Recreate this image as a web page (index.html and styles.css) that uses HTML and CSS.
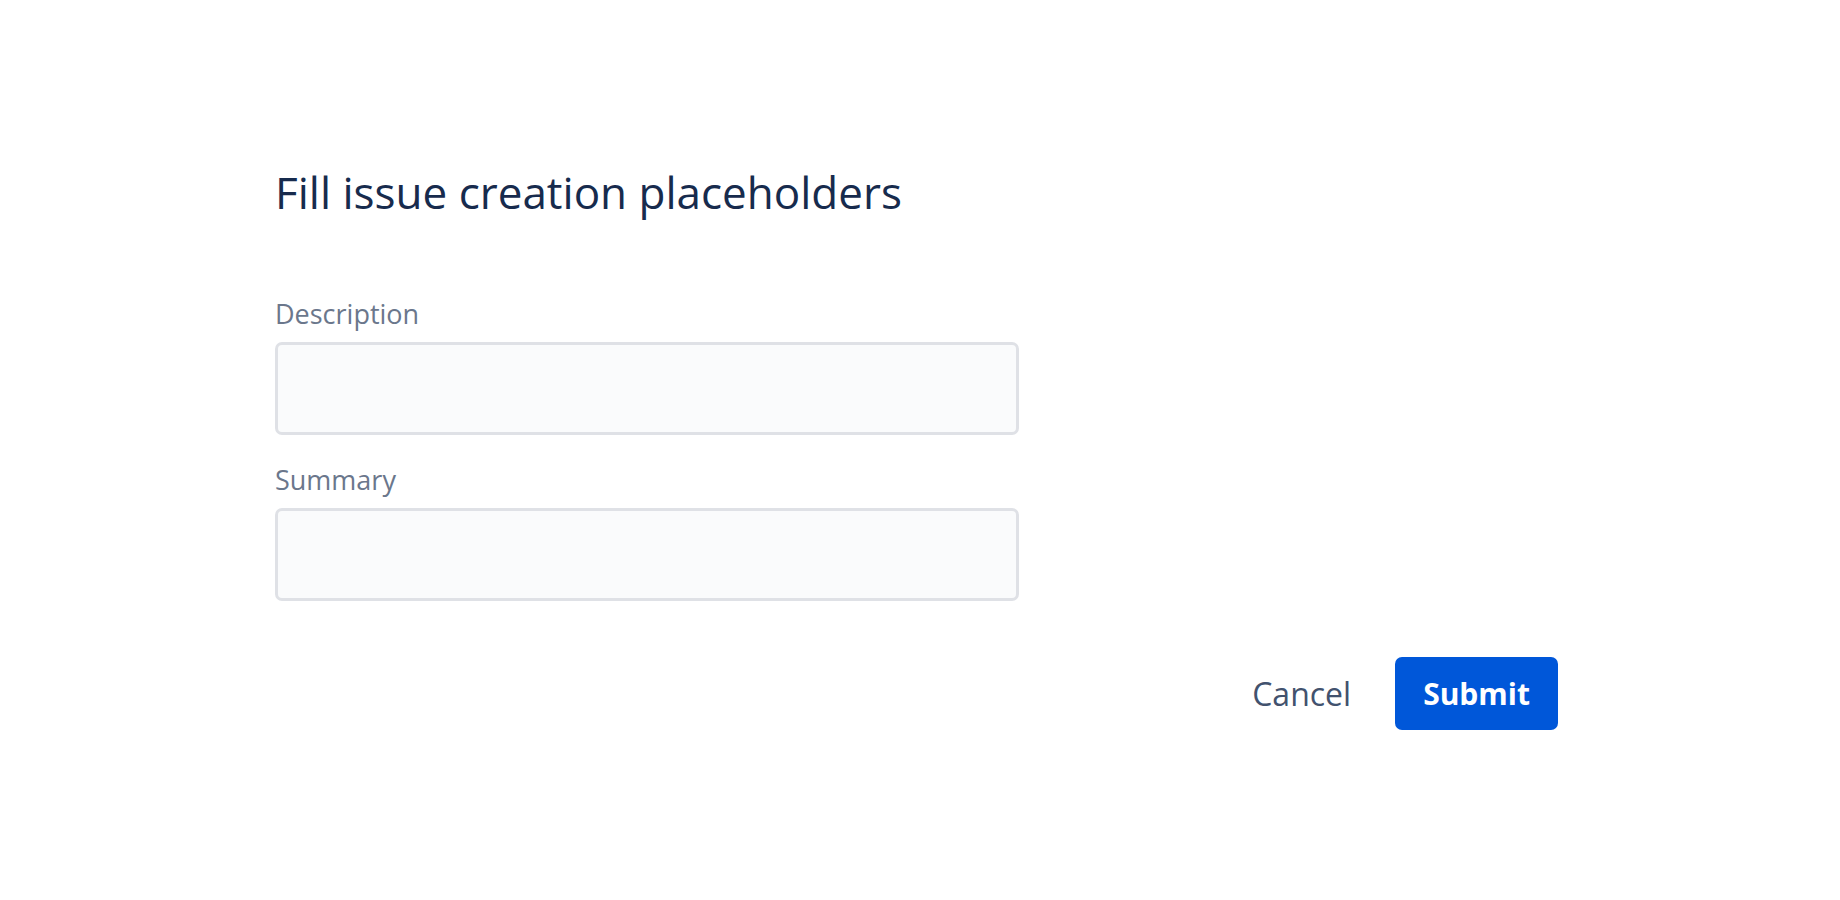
FILE: index.html
```html
<!DOCTYPE html>
<html lang="en">
<head>
    <meta charset="UTF-8">
    <meta name="viewport" content="width=device-width, initial-scale=1.0">
    <title>Fill issue creation placeholders</title>
    <link rel="stylesheet" href="styles.css">
</head>
<body>
    <div class="dialog">
        <h1 class="dialog-title">Fill issue creation placeholders</h1>
        <form class="placeholder-form" onsubmit="return false;">
            <div class="field">
                <label for="description">Description</label>
                <input type="text" id="description">
            </div>
            <div class="field">
                <label for="summary">Summary</label>
                <input type="text" id="summary">
            </div>
            <div class="actions">
                <button type="button" class="btn btn-subtle">Cancel</button>
                <button type="submit" class="btn btn-primary">Submit</button>
            </div>
        </form>
    </div>
</body>
</html>
```

FILE: styles.css
```css
* {
    margin: 0;
    padding: 0;
    box-sizing: border-box;
}

body {
    font-family: "Open Sans", "Noto Sans", sans-serif;
    background-color: #ffffff;
    color: #172b4d;
}

.dialog {
    width: 1283px;
    margin-left: 275px;
    padding-top: 164px;
}

.dialog-title {
    font-size: 44px;
    font-weight: 400;
    line-height: 56px;
    color: #172b4d;
    margin-bottom: 76px;
}

.placeholder-form {
    display: flex;
    flex-direction: column;
}

.field {
    display: flex;
    flex-direction: column;
    width: 744px;
    margin-bottom: 27px;
}

.field label {
    font-size: 27px;
    font-weight: 500;
    line-height: 36px;
    color: #6b778c;
    margin-bottom: 10px;
}

.field input {
    height: 93px;
    border: 3px solid #dfe1e6;
    border-radius: 7px;
    background-color: #fafbfc;
    outline: none;
    font-family: inherit;
    font-size: 30px;
    padding: 0 16px;
}

.actions {
    display: flex;
    justify-content: flex-end;
    gap: 16px;
    margin-top: 29px;
}

.btn {
    height: 73px;
    border: none;
    border-radius: 7px;
    font-family: inherit;
    font-size: 30px;
    padding: 0 28px;
    cursor: pointer;
}

.btn-subtle {
    background: none;
    color: #42526e;
    font-size: 32px;
    font-weight: 500;
}

.btn-primary {
    background-color: #0057d9;
    color: #ffffff;
    font-weight: 700;
}
```
